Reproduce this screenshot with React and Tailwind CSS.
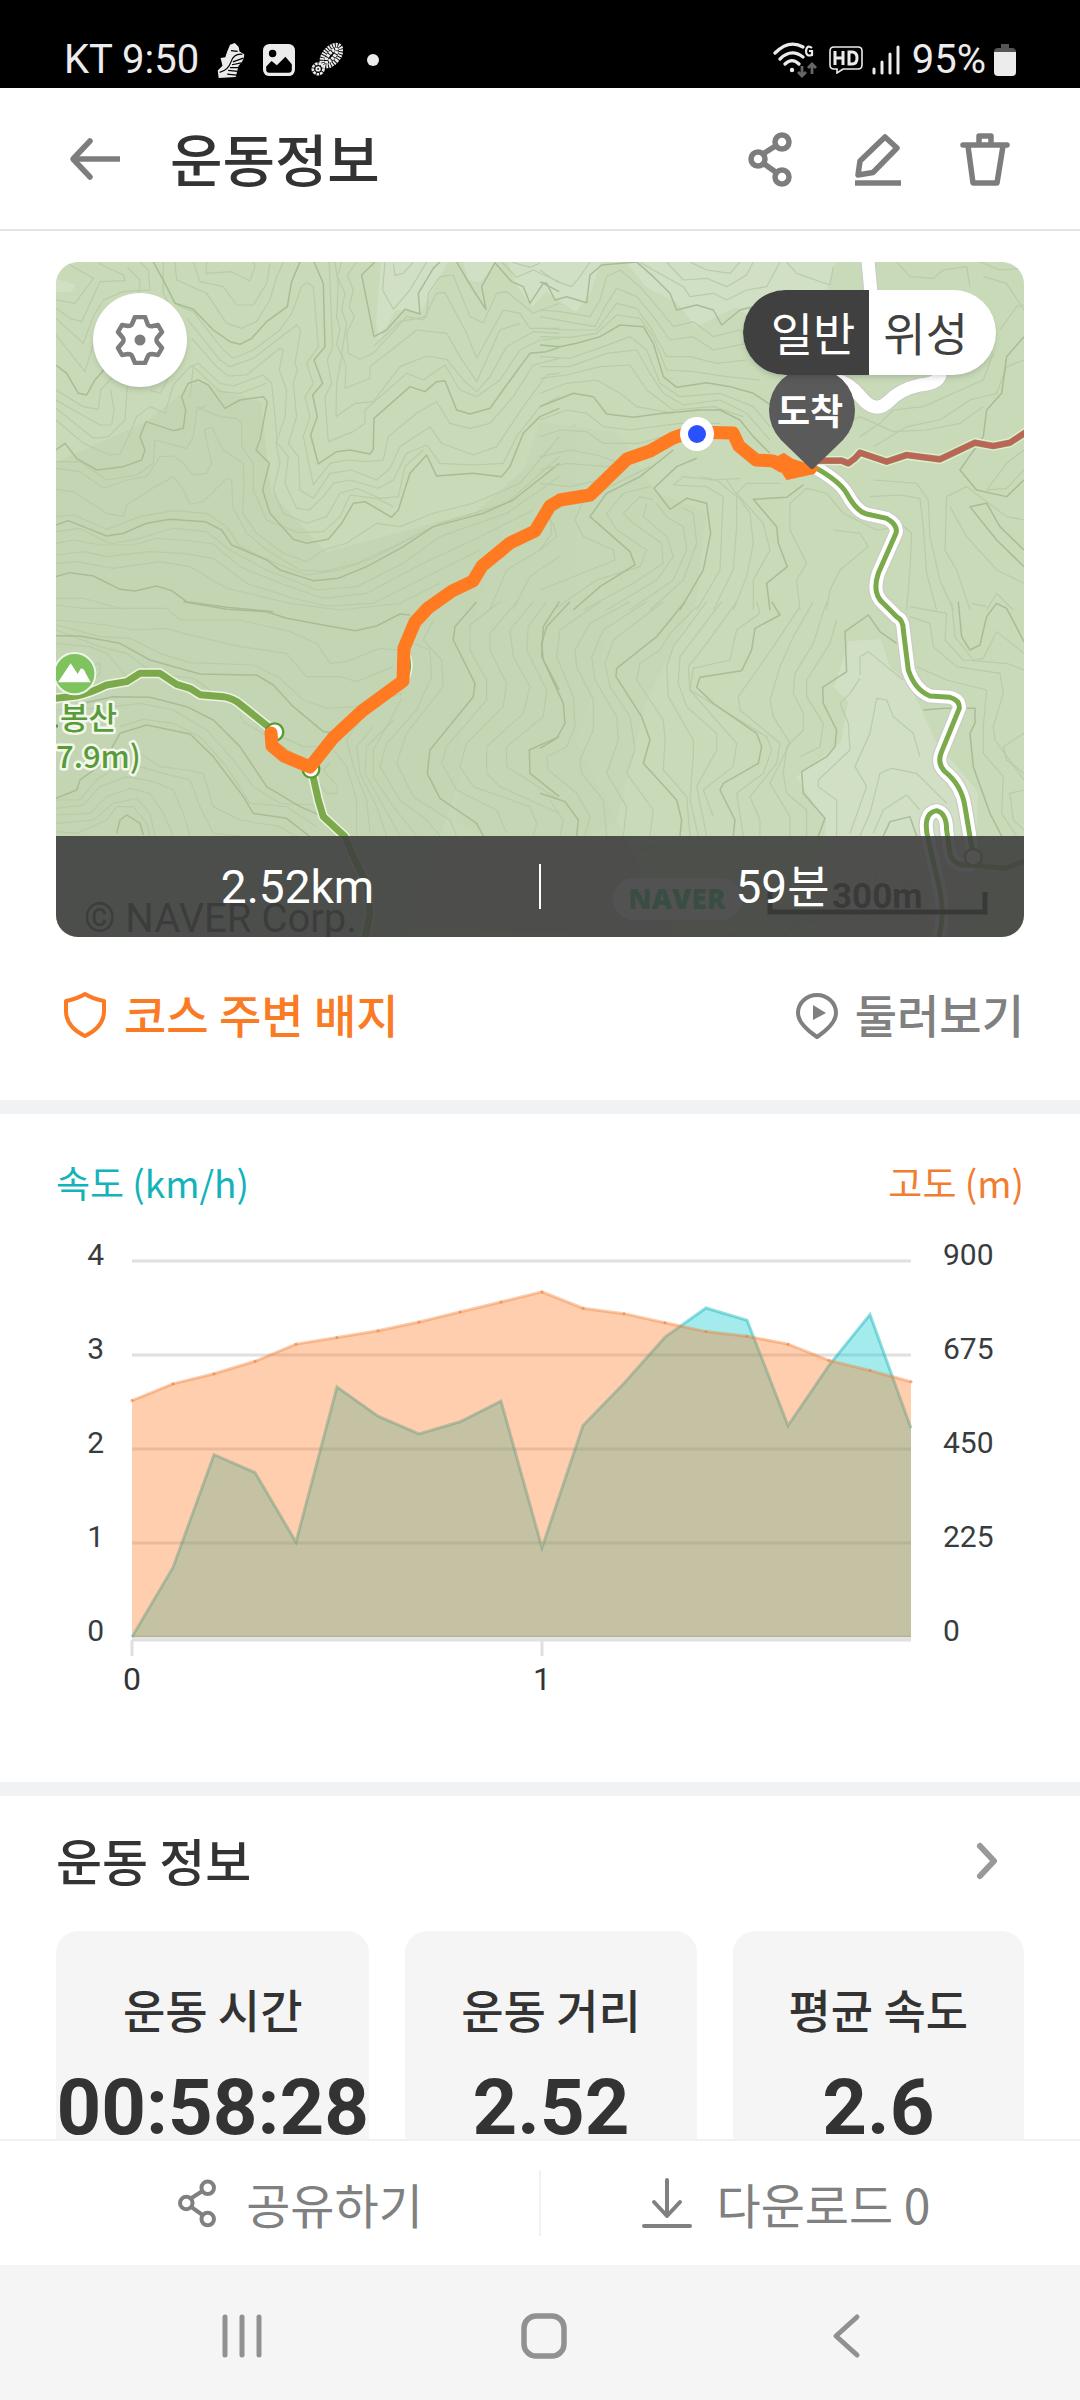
import React from 'react';

const SPEED = [0, 0.74, 1.94, 1.75, 1.01, 2.66, 2.35, 2.16, 2.29, 2.51, 0.95, 2.25, 2.7, 3.19, 3.5, 3.37, 2.25, 2.89, 3.43, 2.22];
const ALTITUDE = [566, 606, 630, 660, 701, 717, 733, 754, 778, 802, 826, 787, 774, 752, 731, 720, 701, 662, 638, 611];

// Contour lines, one list per map tile. A tile is 1500 units wide.
const TILES = [
  {
    transform: 'translate(-16 -12) scale(0.3333)',
    major: [
      '340,36 375,100 405,160 460,178 520,240 570,275 600,283 635,265 680,215 742,170 755,95 780,36',
      '822,36 850,100 855,290 822,330 848,400 818,435 832,500 812,555 835,642 890,605 930,600 990,612 1000,598 1002,505 1110,410 1155,425 1190,395 1215,392 1250,480 1290,492 1350,475 1400,405 1470,310 1520,305 1558,292',
      '1005,36 965,75 1002,260 1040,240 1095,178 1140,192 1135,130 1180,55 1200,36',
      '1250,36 1300,120 1338,178 1325,110 1365,38 1415,95 1450,110 1470,160 1510,100 1558,125',
      '48,345 80,370 115,430 140,435 165,390 200,350',
      '48,600 75,580 110,625 170,660 250,650 305,630 315,600 300,560 318,515 400,542 430,535 437,480 425,440 445,400 475,390 505,405 555,475 600,450 670,440 682,455 660,570 648,600 688,640 668,720 690,790 760,868 800,880 865,868 905,820 940,760 975,755 1055,802 1075,780 1110,670 1160,615 1190,678 1300,670 1385,680 1410,650 1450,550 1500,500 1558,475',
      '48,825 85,812 130,830 200,858 250,850 320,820 390,808 495,815 545,840 575,885 680,930 720,960 820,992 895,985 980,950 1090,890 1180,830 1330,790 1420,750 1558,640',
      '48,980 90,968 160,978 240,1018 285,1023 350,1008 395,1022 440,1055 560,1072 700,1085',
    ],
    minor: [
      '85,42 160,85 105,160 48,150',
      '175,40 250,75 255,92 180,95 125,215 90,205 48,175',
      '48,205 130,280 160,200 190,150 250,125 330,120 325,60 300,36',
      '262,52 300,90 298,128',
      '48,255 135,365 165,265',
      '48,420 130,470 175,478 182,420 220,380',
      '48,450 180,525 215,525 222,480 212,420',
      '48,475 160,565 205,560 255,510 262,410',
      '48,510 130,580 210,615 240,612 265,560 290,500 330,470 375,490 400,405 450,350 475,340 540,400 580,408 670,375 695,400 705,500 712,580 745,620 735,700 770,775 808,780 850,740 880,700 930,690 1015,715 1060,690 1100,610 1160,585 1200,640 1300,645 1390,640 1430,560 1500,470 1558,440',
      '330,420 360,430 410,340 430,240 370,130 370,36',
      '405,36 410,90 500,130 560,220 605,235 650,215 690,150 710,80 730,36',
      '460,36 480,95 550,110 590,165 640,165 680,100 690,40',
      '500,36 498,70 575,65 630,93 645,50 640,36',
      '410,165 460,185 550,300 580,325 640,300 720,240 755,190 785,110 800,97 820,110 835,290 800,340 820,400 795,440 810,500 790,560 820,705 870,640 920,630 980,635 1030,630 1045,560 1130,490 1190,455 1230,520 1290,535 1350,520 1420,440 1480,345 1558,325',
      '440,205 540,330 570,350 640,325 770,225 782,240 765,340 772,360 760,400 770,500 745,580 775,620 780,720 820,745 870,670 935,660 1010,690 1050,655 1080,590 1170,530 1205,580 1300,615 1370,590 1450,470 1520,375 1558,370',
      '455,265 530,350 565,378 620,375 720,295 730,300 718,360 740,420 735,500 708,580 720,640 700,720 730,790 800,820 860,800 900,730 950,715 1020,745 1075,740 1095,650 1150,600',
      '450,440 460,350 540,425 600,430 680,400',
      '468,470 540,500 590,505 605,520 605,590 640,640 640,720 680,810 775,848 850,845 900,800 930,735 1010,745 1060,770',
      '497,560 494,538 515,532 550,600 610,640 612,700 608,790 650,850 730,910 800,935 850,900 920,880 1010,820 1080,830 1180,790 1300,760 1440,700 1558,560',
      '48,635 120,635 200,690 290,675 340,640 345,570 440,595 460,560 470,480 500,465',
      '48,655 120,665 190,715 260,690 320,680 360,620 400,618 430,640 460,675 500,670 515,640 497,560',
      '48,718 100,725 200,790 250,800 260,765 345,710 400,680 430,720 450,762 490,755 560,685 575,690 578,770 620,850 680,900 780,960 850,965 950,940 1060,890 1200,820 1400,760 1558,620',
      '48,800 100,795 200,838 300,800 400,782 500,790 560,830 600,890 720,945 800,975 900,960 1000,925 1120,860',
      '48,845 120,835 210,882 300,865 400,835 500,845 570,900 680,960 830,1020 950,1010 1090,940 1200,860 1400,790 1558,680',
      '48,880 100,870 180,885 280,885 350,865 430,870 520,882 600,950 720,1000 850,1045 980,1030 1150,940 1300,870 1480,780',
      '48,915 130,905 200,920 330,905 430,910 520,925 620,1000 760,1045 860,1068 1000,1060 1180,970 1320,900',
      '48,940 110,935 220,955 360,935 450,950 560,1015 750,1060 900,1080 1080,1060 1200,1000',
      '48,1045 130,1045 250,1078',
      '868,36 870,100 878,290 862,330 875,400 855,440 865,575 940,545 975,520 975,480 1100,370 1150,390 1215,345 1260,420 1310,440 1380,390 1440,300 1500,270 1558,265',
      '885,36 895,100 890,200 900,240 890,280 905,320 890,400 888,500 945,460 1000,455 1080,350 1160,318 1220,328 1270,390 1310,425 1350,380 1400,290 1480,245 1558,250',
      '905,36 892,80 915,130 905,180 920,220 905,310 918,350 915,415 990,385 990,350 1080,280 1130,240 1220,250 1260,320 1310,395 1380,240 1440,220',
      '950,36 922,75 940,120 928,170 943,200 920,250 925,310 960,328 1000,310 1100,200 1150,210 1190,130 1215,128 1280,250 1310,325 1390,180 1440,190 1470,235 1558,235',
      '1000,290 1080,215 1160,200 1165,130 1200,80 1240,75 1290,200 1330,218 1370,130 1400,125 1480,190 1558,160',
      '1035,36 1028,120 1060,178 1110,120 1160,36',
      '1060,40 1065,76 1090,70 1120,36',
      '1385,36 1430,82 1480,60 1558,95',
      '1415,36 1470,52 1500,40',
      '1350,1078 1400,960 1500,900 1535,850 1530,780',
      '1420,1078 1470,980 1558,920',
    ],
  },
  {
    transform: 'translate(484 -12) scale(0.3333)',
    major: [
      '0,97 20,100 45,150 80,140 140,158 150,75 185,45 290,36 340,80 390,130 410,180 470,165 520,180 545,225 600,180 640,170',
      '0,285 60,290 110,280 180,260 240,225 310,230 340,280 370,380 410,412 500,398 570,410 640,430 700,470',
      '0,470 50,450 100,430 160,440 200,492 280,502 370,490 480,480 540,480 600,510 640,560 690,610',
      '470,625 410,650 342,715 390,778 440,745 500,760 512,850 490,960 420,1080',
      '790,705 740,742 640,748 710,830 715,880 742,950 680,1000 690,1080',
      '400,600 300,680 200,730 150,800 270,905 285,945 180,1010 100,1080',
      '1452,260 1400,320 1385,430 1340,480 1330,560 1260,660 1310,720 1400,740 1452,690',
      '1452,900 1380,830 1340,760 1290,770 1370,870 1452,950',
    ],
    minor: [
      '0,60 50,95 95,110 120,80 150,36',
      '0,180 60,185 150,200 180,150 200,80 240,60 300,110 360,180 400,230 460,215 520,260 600,240 640,260',
      '0,200 80,215 165,230 195,170 230,115 290,140 340,200 390,270 460,260 520,300 620,280',
      '0,235 80,240 170,240 230,160 290,175 330,230 380,320 450,320 530,340 620,330',
      '0,260 90,262 170,250 230,195 300,205 340,260 380,360 460,365 560,380 660,390',
      '0,320 90,325 190,290 270,260 320,300 360,400 420,440 540,430 640,470 690,530',
      '0,350 90,350 200,310 290,300 330,370 370,430 430,465 540,450 620,490 690,570',
      '0,385 80,375 180,350 270,345 320,420 400,480 520,470 610,500',
      '0,430 80,400 170,390 240,430 290,470 400,490',
      '0,510 80,480 140,490 190,530 270,540 420,520 540,520',
      '0,560 60,540 140,545 190,580 300,580 420,545',
      '0,620 90,600 170,615 240,640 300,600 380,580',
      '0,660 80,640 200,650 260,640',
      '300,36 340,60 430,110 450,140 520,130 560,150 620,120 680,110 720,36',
      '380,36 430,90 500,85 560,110 620,75 640,36',
      '450,36 500,60 570,70 600,36',
      '740,36 770,70 870,105 880,50',
      '1070,36 1110,80 1180,85 1210,60 1280,50 1290,110',
      '1320,36 1380,60 1452,55',
      '1330,80 1400,100 1452,180',
      '1380,240 1430,170 1452,165',
      '960,560 1020,520 1060,480 1150,470 1240,430 1330,390 1360,310',
      '1000,590 1100,530 1200,510 1290,450 1370,430 1400,350 1452,330',
      '920,520 960,500 1060,545 1160,540 1260,520 1330,470',
      '0,700 90,710 180,690 240,650',
      '0,900 50,860 40,820 0,780',
      '0,1020 150,960 225,930 220,900 130,860 105,810 130,750 230,700 330,650',
      '40,1080 170,990 300,950 320,900 230,840 200,790 250,730 330,710',
      '130,1080 280,1000 370,940 365,880 280,820 250,790 300,740 340,750',
      '200,1080 350,990 400,920 380,860 310,800 320,760',
      '270,1080 400,990 440,900 430,830 380,800 350,760',
      '330,1080 430,990 470,880 460,790 430,775',
      '470,1080 540,960 545,840 550,740 500,710 400,705 430,680 520,690 600,685',
      '520,1080 580,960 590,830 590,740 530,690 480,680',
      '580,1080 620,980 640,880 630,790 560,690',
      '640,1080 640,990 690,900 670,820 590,730 620,700 720,700',
      '780,1080 770,990 800,940 750,840 750,760 800,715 860,730 910,790 1010,840 1050,835',
      '860,1080 870,1020 900,960 985,890 960,850 880,840',
      '1100,1080 1110,960 1115,850 1080,820',
      '1190,1080 1160,970 1150,830 1140,745 1080,735 990,740',
      '1240,1080 1200,990 1170,860 1165,750 1130,700 1000,690',
      '1290,1080 1250,960 1215,900 1220,740 1280,710 1400,800 1452,810',
      '1452,600 1400,640 1340,720 1400,715 1452,660',
      '1452,1000 1370,960 1280,860 1230,770',
      '1340,1080 1370,1030 1420,1080',
    ],
  },
  {
    transform: 'translate(-16 338) scale(0.3333)',
    major: [
      '430,5 560,28 680,35 740,55 850,75 945,92 1010,78 1080,42 1110,45',
      '48,107 120,108 240,130 330,180 480,222 620,225 650,225 700,255 760,320 850,395 900,400',
      '48,595 110,570 120,540 190,490 240,400 320,375 450,402 520,470 610,590 640,640 740,655 810,710',
      '1310,5 1245,80 1240,120 1305,250 1300,290 1170,450 1162,520 1200,595 1310,670 1330,708',
      '1558,5 1510,80 1505,170 1558,270',
      '48,300 90,318 220,290 330,292 440,320 520,360 600,440 680,560 780,620 850,650',
      '1558,410 1468,450 1470,520 1558,590',
      '230,700 240,660 260,645 300,670 310,705',
    ],
    minor: [
      '48,15 130,25 380,25 420,60 600,60 750,95 830,130 870,190 920,185 1020,145 1070,150',
      '48,60 200,75 280,90 380,85 430,100 600,140 740,160 800,230 900,230 950,245 1060,200',
      '48,75 180,110 270,115 360,160 450,188 640,195 720,235 790,300 860,325 950,320 1000,300',
      '48,90 180,140 260,160 340,220 460,235 550,300',
      '48,130 150,140 200,160 260,230',
      '140,200 180,190 180,220 165,235',
      '620,340 700,400 790,440 840,440 890,400',
      '600,345 610,365 700,420 760,460',
      '48,330 170,325 300,310 400,330 500,390 580,480 640,560 720,610 820,615',
      '240,380 310,358 400,370 480,410 560,500 630,610 740,620 830,680',
      '300,460 360,500 440,510 490,520 520,620 600,660 720,680 770,710',
      '240,510 300,500 370,520 450,540 480,620 520,700 600,708',
      '48,600 120,600 170,540 230,500',
      '48,625 130,615 180,560 260,530 340,545 400,570 430,640 450,708',
      '48,645 150,640 200,590 270,565 330,580 370,640 400,708',
      '48,670 160,660 220,610 290,595 330,640 345,708',
      '48,695 110,700 200,660 230,620 280,620 320,670 330,708',
      '830,540 860,580 890,580 893,560 850,510 870,490',
      '880,450 920,500 950,600 950,708',
      '960,360 920,420 940,500 980,600 990,700',
      '1000,380 950,440 960,520 1010,620 1040,708',
      '1060,360 980,440 975,520 1020,600 1080,708',
      '1085,295 1040,380 1000,450 1000,530 1060,620 1130,708',
      '1080,290 1085,280 1060,290',
      '1120,130 1170,150 1175,230 1130,330 1040,430 1020,500 1080,600 1160,660 1200,708',
      '1180,60 1150,120 1205,180 1210,260 1100,400 1070,490 1120,590 1230,660 1250,708',
      '1380,5 1290,75 1290,150 1340,240 1340,300 1220,440 1205,490 1250,570 1370,630 1400,700',
      '1430,5 1350,100 1350,150 1400,250 1390,320 1280,430 1260,500 1300,560 1470,620 1490,670 1480,708',
      '1480,5 1410,90 1420,170 1470,260 1450,340 1340,440 1340,520 1380,560 1558,640',
      '1520,5 1465,80 1460,150 1520,270 1510,350 1400,440 1400,500 1558,600',
    ],
  },
  {
    transform: 'translate(484 338) scale(0.3333)',
    major: [
      '90,5 20,80 5,130 10,180 70,310 75,370 50,415 0,445',
      '435,5 350,110 230,205 228,230 305,350 330,420 310,490 410,600 425,660 420,708',
      '695,5 720,45 645,85 635,150 605,212 480,232 470,262 520,310 650,400 665,440 655,490 550,550 540,570 585,660 580,708',
      '1070,130 1020,95 985,45 915,95 920,215 848,262 850,310 890,390 885,440 860,470 785,515 790,580 855,655 835,708',
      '0,580 75,605 115,660 110,708',
      '1150,330 1215,325 1305,325 1305,370 1290,400 1300,500 1350,640 1385,708',
      '1255,5 1265,110 1290,150 1320,135 1340,50 1370,10 1400,25 1452,125',
      '1030,708 1050,665 1110,650 1130,708',
    ],
    minor: [
      '180,5 60,90 50,170 100,290 105,380 80,440 20,470 25,510 110,580 150,650 135,708',
      '270,5 150,70 105,150 110,200 160,300 160,390 120,480 125,520 190,600 200,708',
      '320,5 190,90 155,170 165,240 230,350 235,420 200,520 260,620 250,708',
      '370,5 220,120 195,190 210,260 270,350 285,450 260,520 340,630 330,708',
      '470,20 390,100 360,150 300,190 290,240 370,360 375,420 370,510 440,590 450,708',
      '500,5 400,140 380,200 385,290 460,420 460,470 450,600 475,708',
      '545,5 420,170 415,250 440,320 530,400 530,450 470,560 500,708',
      '590,5 500,130 445,200 450,270 590,430 580,500 490,570 520,650',
      '650,5 660,40 590,90 570,180 460,205 450,270 680,410 695,450 670,520 590,580 610,708',
      '780,20 700,140 630,240 595,290 600,330 720,430 710,490 630,590 660,660 660,708',
      '820,5 760,110 720,200 690,300 700,350 750,430 690,550 750,650 750,708',
      '860,5 820,130 765,220 760,280 790,340 790,390 740,440 730,520 740,580 800,630 800,708',
      '890,60 870,130 800,240 800,290 850,370 840,440 780,470',
      '960,225 960,170 985,155 1040,200 1090,240',
      '900,310 930,280 960,235',
      '900,310 925,370 930,450 835,540 835,560 890,600 890,708',
      '1140,470 1120,400 1060,350 1040,300 1010,295 990,400 945,500 980,560 930,700',
      '960,708 990,640 1010,560 1020,520 1055,505 1130,520 1220,610',
      '1000,700 1030,630 1100,585 1140,630',
      '1110,50 1170,70 1180,140 1250,200 1380,220 1390,280 1360,380 1365,420 1452,540',
      '1130,200 1220,240 1340,270 1330,380 1330,460 1390,530 1385,640 1430,708',
      '1110,20 1220,40 1215,120 1270,180 1400,190 1452,210',
      '1235,5 1245,110 1300,180 1330,175 1370,95 1452,160',
      '1295,10 1340,20',
      '1452,400 1390,440 1400,480 1452,520',
      '30,600 70,660 60,708',
      '1452,570 1410,580 1420,660 1452,690',
      '60,900 200,790 330,740 450,760',
      '730,1010 780,960 900,970 1000,940 1090,880 1140,800',
      '560,1010 640,980 700,1000 860,900',
      '1000,900 1010,800 1060,750 1100,800 1090,900 1150,960',
    ],
  },
];

const MapView = () => (
  <svg viewBox="0 0 968 675" preserveAspectRatio="xMidYMid slice" className="block h-full w-full" aria-label="운동 경로 지도">
    <rect width="968" height="675" fill="#c8dab8" />
    {/* forest shading */}
    <g fill="#c4d5b3">
      <path d="M0 200L90 160L140 120L205 140L215 230L270 290L420 250L520 160V330L430 440L350 675H0Z" />
      <path d="M484 160L560 170L600 230L650 250L640 340L590 440L560 560L480 600L400 560L410 380Z" opacity=".7" />
      <path d="M180 660L330 560L390 450L420 330L560 340L520 480L620 675Z" opacity=".5" />
    </g>
    <g fill="#d1dfc4">
      <path d="M325 0H392L365 50L340 48L323 78L320 60ZM407 0H440L425 20L412 18ZM452 0H545L535 30L520 50L490 30L476 45L460 22Z" />
      <path d="M570 0H780L770 30L700 60L680 45L640 65L620 40L590 25Z" />
      <path d="M0 17L20 23L15 30H0Z" />
      <path d="M793 379L825 377L834 405L850 418L862 440L880 480L922 530L920 590L900 675H760L770 560L740 515L785 480L792 440L778 425Z" />
    </g>
    {TILES.map((tile) => (
      <g key={tile.transform} transform={tile.transform} fill="none" strokeLinejoin="round">
        <g stroke="#b9cba8" strokeWidth="3.5">
          {tile.minor.map((points) => <polyline key={points} points={points} />)}
        </g>
        <g stroke="#a9bc98" strokeWidth="4.5">
          {tile.major.map((points) => <polyline key={points} points={points} />)}
        </g>
      </g>
    ))}

    {/* roads */}
    <g transform="translate(484 338) scale(0.3333)" fill="none" strokeLinejoin="round" strokeLinecap="round">
      {[
        ['#c9ccc4', 46],
        ['#ffffff', 39],
      ].map(([color, width]) => (
        <g key={color} stroke={color} strokeWidth={width}>
          <path d="M982 -1040L995 -900M890 -660Q930 -650 960 -612Q1005 -555 1045 -595Q1080 -632 1140 -645Q1200 -650 1200 -680" />
          <path d="M830 -395Q900 -355 920 -320Q950 -265 980 -258L1040 -245Q1075 -225 1068 -200L1015 -80Q995 -20 1030 10L1070 50Q1090 60 1090 90L1105 210Q1125 270 1170 288L1230 292Q1260 300 1258 325L1205 455Q1190 490 1215 515Q1265 555 1275 620L1300 770" />
          <path d="M1195 1020Q1215 950 1200 870L1165 720Q1145 640 1190 632Q1220 640 1220 690L1230 760Q1240 800 1290 795" />
        </g>
      ))}
      <g stroke="#7aaa4b" strokeWidth="15">
        <path d="M830 -395Q900 -355 920 -320Q950 -265 980 -258L1040 -245Q1075 -225 1068 -200L1015 -80Q995 -20 1030 10L1070 50Q1090 60 1090 90L1105 210Q1125 270 1170 288L1230 292Q1260 300 1258 325L1205 455Q1190 490 1215 515Q1265 555 1275 620L1300 770" />
        <path d="M1195 1020Q1215 950 1200 870L1165 720Q1145 640 1190 632Q1220 640 1220 690L1230 760Q1240 800 1290 795L1395 805L1452 785" />
      </g>
      <circle cx="1300" cy="772" r="25" fill="#fff" stroke="#5b9a33" strokeWidth="7" />
      <polyline points="830,-418 905,-418 925,-410 945,-425 960,-442 1040,-415 1100,-435 1200,-422 1305,-472 1360,-462 1410,-472 1460,-505" stroke="#e6ecd6" strokeWidth="28" />
      <polyline points="830,-418 905,-418 925,-410 945,-425 960,-442 1040,-415 1100,-435 1200,-422 1305,-472 1360,-462 1410,-472 1460,-505" stroke="#8b9b4f" strokeWidth="20" />
      <polyline points="830,-418 905,-418 925,-410 945,-425 960,-442 1040,-415 1100,-435 1200,-422 1305,-472 1360,-462 1410,-472 1460,-505" stroke="#bd6358" strokeWidth="16" />
    </g>

    {/* trails */}
    <g transform="translate(-16 338) scale(0.3333)" fill="none" strokeLinejoin="round">
      {[
        ['#edf3e4', 30],
        ['#7caa4b', 21],
      ].map(([color, width]) => (
        <g key={color} stroke={color} strokeWidth={width}>
          <path d="M40 296L110 288Q150 280 200 255L260 245L300 220H360L410 253L450 265L480 284L550 290Q580 295 600 312L700 392" />
          <path d="M815 510L835 600L850 650L915 710L940 770L980 850L990 940L975 1015" />
          <path d="M1090 150Q1118 200 1085 250" />
        </g>
      ))}
      <circle cx="704" cy="396" r="26" fill="#fff" stroke="#5b9a33" strokeWidth="7" />
      <circle cx="813" cy="508" r="25" fill="#fff" stroke="#5b9a33" strokeWidth="7" />
      <circle cx="104" cy="221" r="62" fill="#7fc35f" stroke="#eef5e8" strokeWidth="6" />
      <path d="M54 247L92 190L113 222L122 206Q132 204 137 220L152 247Z" fill="#fff" />
    </g>
    <g fill="#589b3a" stroke="#f3f7ec" strokeWidth="5" paintOrder="stroke" strokeLinejoin="round" className="font-['Noto_Sans_CJK_KR',sans-serif] text-[31px] font-medium">
      <path d="M-4 464H2" fill="none" stroke="#589b3a" strokeWidth="3" />
      <text x="4" y="467">봉산</text>
      <text x="0" y="506">7.9m)</text>
    </g>

    {/* recorded route */}
    <polyline
      points="215,471 216,484 228,494 254,505 277,476 306,449 347,419 348,386 359,360 372,346 396,329 417,319 426,304 454,281 479,269 494,244 504,238 534,233 571,197 594,189 617,176 634,170 677,171 683,184 700,198 717,199 726,204"
      fill="none"
      stroke="#ff7a20"
      strokeWidth="13"
      strokeLinejoin="round"
      strokeLinecap="round"
    />
    <path d="M722 195L728 192L737 198L762 206L758 211L731 217L725 208Z" fill="#ff7a20" stroke="#ff7a20" strokeWidth="2" strokeLinejoin="round" />
    <circle cx="641" cy="172" r="17" fill="#fff" />
    <circle cx="641" cy="172" r="9" fill="#2b50ff" />
    <path d="M755 207L725 178A43 43 0 1 1 787 178L757 207Z" fill="#5a5a5a" />
    <text x="754" y="163" textAnchor="middle" fill="#fff" className="font-['Noto_Sans_CJK_KR',sans-serif] text-[36px] font-bold">도착</text>

    {/* attribution and scale */}
    <text x="28" y="670" fill="#222" className="font-[Roboto,sans-serif] text-[40px]">© NAVER Corp.</text>
    <rect x="557" y="616" width="129" height="42" rx="21" fill="#fff" />
    <text x="621" y="647" textAnchor="middle" fill="#03c75a" className="font-['Open_Sans',sans-serif] text-[28px] font-extrabold">NAVER</text>
    <text x="776" y="646" fill="#111" className="font-[Roboto,sans-serif] text-[35px] font-bold">300m</text>
    <path d="M714 630V650H929V630" fill="none" stroke="#000" strokeWidth="5" />
  </svg>
);

const ShareIcon = ({ className, strokeWidth }) => (
  <svg viewBox="0 0 56 56" fill="none" stroke="currentColor" strokeWidth={strokeWidth} className={className} aria-hidden="true">
    <path d="M21 23L35 14M21 32L35 42" />
    <circle cx="40" cy="11" r="7" />
    <circle cx="16" cy="28" r="7" />
    <circle cx="40" cy="46" r="7" />
  </svg>
);

const StatusBar = () => (
  <div className="flex h-22 shrink-0 items-end justify-between bg-black px-16 pb-2 font-[Roboto,sans-serif] text-[40px] leading-10 text-[#ececec]">
    <div className="flex items-center gap-4">
      <span className="whitespace-nowrap">KT 9:50</span>
      <svg viewBox="0 0 30 38" className="h-9 w-8" fill="currentColor" aria-hidden="true">
        <path d="M14 3L19 1L23 5L24 10L29 13Q29 20 23 25L20 37L2 38L1 30L6 25L4 17L9 16L11 10Z" />
        <path d="M3 32Q12 30 15 21T27 13M17 21L28 17M16 24L26 22M14 27L23 27M12 30L22 31M11 34L21 35M15 9L22 10" stroke="#000" strokeWidth="1.3" fill="none" />
      </svg>
      <svg viewBox="0 0 30 30" className="h-8 w-8" aria-hidden="true">
        <rect width="30" height="30" rx="6" fill="currentColor" />
        <circle cx="9" cy="9" r="3.5" fill="#000" />
        <path d="M3 21L8 16L13 20L21 12L27 19V24Q27 27 24 27H6Q3 27 3 24Z" fill="#000" />
      </svg>
      <svg viewBox="0 0 36 36" className="h-9 w-8" fill="none" stroke="currentColor" aria-hidden="true">
        <ellipse cx="23" cy="13" rx="8" ry="14" transform="rotate(40 23 13)" strokeWidth="5" strokeDasharray="2 1" />
        <ellipse cx="23" cy="13" rx="3" ry="9" transform="rotate(40 23 13)" strokeWidth="4" strokeDasharray="3 1" />
        <circle cx="8" cy="28" r="6" strokeWidth="3" strokeDasharray="3 1" />
        <circle cx="8" cy="28" r="2" strokeWidth="2" />
      </svg>
      <span className="ml-2 size-3 rounded-full bg-[#ececec]" />
    </div>
    <div className="flex items-center gap-2">
      <svg viewBox="0 0 46 36" className="h-9 w-12" fill="none" stroke="currentColor" aria-hidden="true">
        <path d="M2 11Q16 -3 30 5M7 17Q18 6 30 15M12 22Q19 15 26 22" strokeWidth="3.2" strokeLinecap="round" />
        <circle cx="19" cy="28" r="2.2" fill="currentColor" stroke="none" />
        <path d="M39 6Q34 2 33 9Q33 15 39 13V9H36" strokeWidth="2.2" />
        <path d="M29 24V34M25 30L29 34L33 30M39 32V22M35 26L39 22L43 26" stroke="#666" strokeWidth="2.8" />
      </svg>
      <svg viewBox="0 0 34 28" className="h-7 w-9" fill="none" stroke="currentColor" aria-hidden="true">
        <path d="M5 1H29Q33 1 33 5V19Q33 23 29 23H14L8 27V23H5Q1 23 1 19V5Q1 1 5 1Z" strokeWidth="1.6" />
        <path d="M6 5V19M14 5V19M6 12H14M20 6V18H23Q28 18 28 12T23 6Z" strokeWidth="3" />
      </svg>
      <svg viewBox="0 0 28 30" className="h-8 w-7" stroke="currentColor" strokeWidth="3" strokeLinecap="round" aria-hidden="true">
        <path d="M2 24V28M10 17V28M18 9V28M26 2V28" />
      </svg>
      <span className="ml-1 whitespace-nowrap">95%</span>
      <svg viewBox="0 0 22 32" className="h-8 w-[22px]" aria-hidden="true">
        <path d="M7 0H15V4H18Q22 4 22 8H0Q0 4 4 4H7Z" fill="#555" />
        <path d="M0 8H22V28Q22 32 18 32H4Q0 32 0 28Z" fill="currentColor" />
      </svg>
    </div>
  </div>
);

const Header = () => (
  <header className="flex h-[143px] shrink-0 items-center border-b-2 border-[#e4e4e4] px-[66px] text-[#7d7d7d]">
    <button type="button" aria-label="뒤로">
      <svg viewBox="0 0 56 56" className="size-14" fill="none" stroke="currentColor" strokeWidth="5.5">
        <path d="M7 28H54" />
        <path d="M24 10L7 28L24 46" strokeLinecap="round" strokeLinejoin="round" />
      </svg>
    </button>
    <h1 className="ml-12 flex-1 pb-1 text-[57px] leading-[72px] font-medium text-[#333]">운동정보</h1>
    <div className="flex gap-[52px]">
      <button type="button" aria-label="공유">
        <ShareIcon className="size-14" strokeWidth="5.5" />
      </button>
      <button type="button" aria-label="수정">
        <svg viewBox="0 0 56 56" className="size-14" fill="none" stroke="currentColor" strokeWidth="5.5" strokeLinejoin="round">
          <path d="M35 6L47 17L23 41.500L8 44L10 30Z" />
          <path d="M5 52H51" />
        </svg>
      </button>
      <button type="button" aria-label="삭제">
        <svg viewBox="0 0 56 56" className="size-14" fill="none" stroke="currentColor" strokeWidth="5.5" strokeLinejoin="round">
          <path d="M5 14H49" strokeLinecap="round" />
          <path d="M21 14V5H33V14M10 15L15 52H39L45 15" />
        </svg>
      </button>
    </div>
  </header>
);

const CourseMap = () => (
  <section className="px-14 pt-[31px]">
    <div className="relative aspect-[968/675] w-full overflow-hidden rounded-[22px]">
      <MapView />
      <button type="button" aria-label="설정" className="absolute top-[31px] left-[37px] flex size-[94px] items-center justify-center rounded-full bg-white text-[#7d7d7d] shadow-md">
        <svg viewBox="0 0 50 50" className="size-[50px]" fill="none" stroke="currentColor" strokeWidth="4.5" strokeLinejoin="round">
          <path d="M20 2H30L33 10Q35 12 38 11L43 10L47 17L42 23Q41 25 42 27L47 33L43 40L37 39Q34 39 33 41L30 48H20L17 41Q16 39 13 39L7 40L3 33L8 27Q9 25 8 23L3 17L7 10L13 11Q16 11 17 9Z" />
          <circle cx="25" cy="25" r="5.5" fill="currentColor" stroke="none" />
        </svg>
      </button>
      <div className="absolute top-7 right-7 flex h-[85px] overflow-hidden rounded-full bg-white text-[46px] leading-[56px] text-[#404040] shadow-md">
        <button type="button" aria-pressed="true" className="bg-[#404040] pr-[14px] pb-1 pl-7 text-white">일반</button>
        <button type="button" aria-pressed="false" className="pr-7 pb-1 pl-[14px]">위성</button>
      </div>
      <div className="absolute inset-x-0 bottom-0 flex h-[101px] items-center bg-[#3f3f3fe6] text-center font-[Roboto,'Noto_Sans_CJK_KR',sans-serif] text-[46px] leading-[60px] text-white">
        <span className="flex-1">2.52km</span>
        <span className="h-[45px] w-0.5 bg-white" />
        <span className="flex-1">59분</span>
      </div>
    </div>
    <div className="mt-[52px] mb-[59px] flex h-[52px] items-center justify-between text-[46px] leading-[52px] font-medium">
      <button type="button" className="flex items-center gap-[14px] pl-1.5 text-[#fb7a24]">
        <svg viewBox="0 0 48 48" className="size-12" fill="none" stroke="currentColor" strokeWidth="4" strokeLinejoin="round" aria-hidden="true">
          <path d="M23 3Q31 8 42 10V20Q42 36 23 45Q4 36 4 20V10Q15 8 23 3Z" />
        </svg>
        <span className="pb-1">코스 주변 배지</span>
      </button>
      <button type="button" className="flex items-center gap-[14px] text-[#808080]">
        <svg viewBox="0 0 48 48" className="size-12" fill="none" stroke="currentColor" strokeWidth="4" strokeLinejoin="round" aria-hidden="true">
          <path d="M24 46Q5 33 5 22A19 18 0 0 1 43 22Q43 33 24 46Z" />
          <path d="M20 14L33 22L20 29Z" fill="currentColor" stroke="none" />
        </svg>
        <span className="pb-1">둘러보기</span>
      </button>
    </div>
  </section>
);

const Chart = () => {
  const left = 76;
  const step = 41;
  const base = 425;
  const rowHeight = 94;
  const right = left + step * (SPEED.length - 1);
  const toPoints = (values, max) =>
    values.map((v, i) => `${left + i * step},${base - (v / max) * rowHeight * 4}`).join(' ');
  const speed = toPoints(SPEED, 4);
  const altitude = toPoints(ALTITUDE, 900);

  return (
    <section className="px-14 pt-10 pb-[70px]">
      <div className="mb-0.5 flex h-14 items-center justify-between text-[37px] leading-[56px]">
        <span className="text-[#12b3ba]">속도 (km/h)</span>
        <span className="text-[#f27d31]">고도 (m)</span>
      </div>
      <svg viewBox="0 0 968 500" className="block h-auto w-full font-[Roboto,sans-serif] text-[30px]" fill="#373d3f">
        {[4, 3, 2, 1, 0].map((n) => (
          <g key={n}>
            <path d={`M${left} ${base - n * rowHeight}H${right}`} stroke="#e0e0e0" strokeWidth="3" />
            <text x="48" y={base - n * rowHeight + 4} textAnchor="end">{n}</text>
            <text x="887" y={base - n * rowHeight + 4}>{n * 225}</text>
          </g>
        ))}
        <path d={`M${left} 428H${right}M${left} 428V444M${left + step * 10} 428V444`} stroke="#e0e0e0" strokeWidth="3" />
        <polygon points={`${left},${base} ${speed} ${right},${base}`} fill="#05c8cb" fillOpacity=".37" />
        <polyline points={speed} fill="none" stroke="#14b4ba" strokeOpacity=".45" strokeWidth="3" />
        <polygon points={`${left},${base} ${altitude} ${right},${base}`} fill="#ff7a27" fillOpacity=".37" />
        <polyline points={altitude} fill="none" stroke="#f27d31" strokeOpacity=".4" strokeWidth="3" />
        {ALTITUDE.map((v, i) => (
          <circle key={i} cx={left + i * step} cy={base - (v / 900) * rowHeight * 4} r="1.5" fill="#f27d31" fillOpacity=".6" />
        ))}
        <g textAnchor="middle" fill="#333" className="text-[32px]">
          <text x={left} y="478">0</text>
          <text x={left + step * 10} y="478">1</text>
        </g>
      </svg>
    </section>
  );
};

const STATS = [
  { label: '운동 시간', value: '00:58:28' },
  { label: '운동 거리', value: '2.52' },
  { label: '평균 속도', value: '2.6' },
];

const WorkoutInfo = () => (
  <section className="px-14 pt-[37px]">
    <div className="flex h-14 items-center justify-between">
      <h2 className="pb-1 text-[50px] leading-[56px] font-medium text-[#333]">운동 정보</h2>
      <button type="button" aria-label="더보기" className="mr-4 text-[#999]">
        <svg viewBox="0 0 40 40" className="size-10" fill="none" stroke="currentColor" strokeWidth="6" strokeLinecap="round" strokeLinejoin="round">
          <path d="M12 5L26 20L12 35" />
        </svg>
      </button>
    </div>
    <div className="mt-[42px] grid grid-cols-[312fr_290fr_290fr] gap-9 text-center text-[#333]">
      {STATS.map((stat) => (
        <div key={stat.label} className="rounded-[22px] bg-[#f5f5f5] pt-[49px] pb-14">
          <div className="text-[46px] leading-[56px] font-medium">{stat.label}</div>
          <div className="mt-8 font-[Roboto,sans-serif] text-[78px] leading-[80px] font-bold">{stat.value}</div>
        </div>
      ))}
    </div>
  </section>
);

const BottomBar = () => (
  <div className="grid h-[126px] shrink-0 grid-cols-[1fr_2px_1fr] items-center border-t-2 border-[#f1f1f3] bg-white text-[48px] leading-[56px] text-[#808080]">
    <button type="button" className="flex items-center justify-center gap-6 pl-14">
      <ShareIcon className="size-[50px]" strokeWidth="4.5" />
      <span>공유하기</span>
    </button>
    <span className="h-[66px] bg-[#f1f1f3]" />
    <button type="button" className="flex items-center justify-center gap-6 pr-12">
      <svg viewBox="0 0 50 50" className="size-[50px]" fill="none" stroke="currentColor" strokeWidth="4" strokeLinecap="round" strokeLinejoin="round" aria-hidden="true">
        <path d="M25 2V38M12 24L25 38L38 24M2 48H48" />
      </svg>
      <span>다운로드 0</span>
    </button>
  </div>
);

const NavBar = () => (
  <nav className="flex h-[135px] shrink-0 items-center justify-between bg-[#f5f5f5] pt-[7px] pr-[210px] pl-[218px] text-[#919191]">
    <button type="button" aria-label="최근 앱">
      <svg viewBox="0 0 48 48" className="size-12" stroke="currentColor" strokeWidth="5" strokeLinecap="round">
        <path d="M7 5V43M24 5V43M41 5V43" />
      </svg>
    </button>
    <button type="button" aria-label="홈">
      <svg viewBox="0 0 48 48" className="size-12" fill="none" stroke="currentColor" strokeWidth="5.5">
        <rect x="4" y="4" width="40" height="40" rx="12" />
      </svg>
    </button>
    <button type="button" aria-label="이전">
      <svg viewBox="0 0 48 48" className="size-12" fill="none" stroke="currentColor" strokeWidth="5" strokeLinecap="round" strokeLinejoin="round">
        <path d="M35 5L14 24L35 43" />
      </svg>
    </button>
  </nav>
);

const App = () => (
  <div className="flex h-screen flex-col bg-white font-['Noto_Sans_CJK_KR',sans-serif]">
    <StatusBar />
    <Header />
    <main className="min-h-0 flex-1 overflow-hidden">
      <CourseMap />
      <div className="h-3.5 bg-[#f1f2f4]" />
      <Chart />
      <div className="h-3.5 bg-[#f1f2f4]" />
      <WorkoutInfo />
    </main>
    <BottomBar />
    <NavBar />
  </div>
);

export default App;
